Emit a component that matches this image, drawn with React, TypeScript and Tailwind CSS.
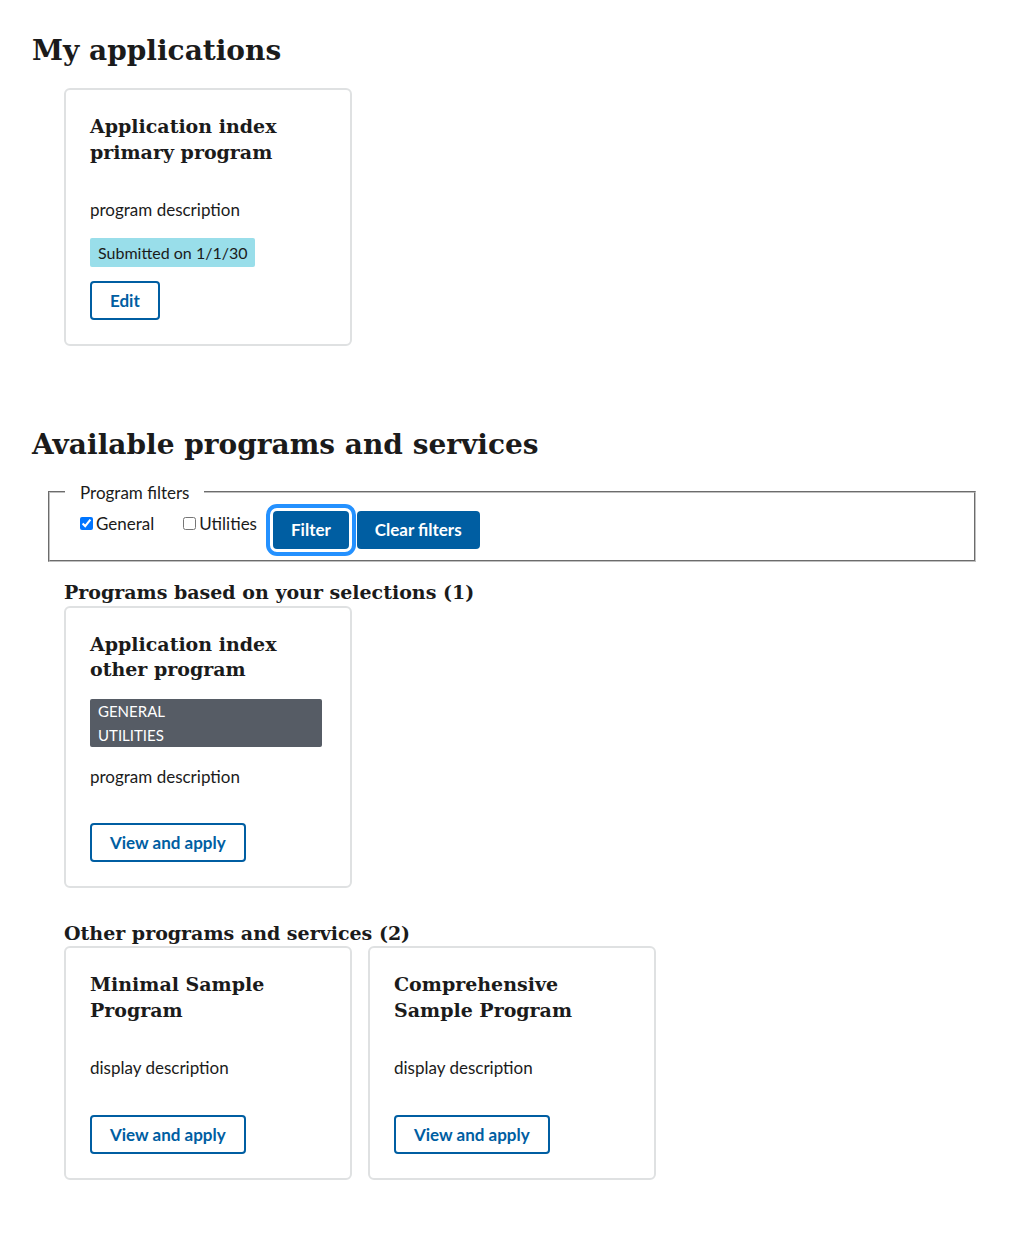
const serif = "font-['DejaVu_Serif',serif] font-bold text-[#1b1b1b]";

function ProgramCard({
  title,
  children,
}: {
  title: string[];
  children: React.ReactNode;
}) {
  return (
    <div className="w-[288px] shrink-0 rounded-md border-2 border-[#dfe1e2] bg-white px-6 pt-6 pb-6">
      <h4 className={`${serif} text-[19px] leading-[25.5px]`}>
        {title.map((line) => (
          <span key={line} className="block">
            {line}
          </span>
        ))}
      </h4>
      {children}
    </div>
  );
}

function OutlineButton({ label, className = "" }: { label: string; className?: string }) {
  return (
    <button
      className={`rounded-[4px] border-2 border-[#005ea2] px-[18px] py-[10px] text-[17px] leading-[15px] font-bold text-[#005ea2] ${className}`}
    >
      {label}
    </button>
  );
}

export default function App() {
  return (
    <div className="min-h-[1244px] bg-white pb-16 font-['Lato',sans-serif] text-[17px] text-[#1b1b1b]">
      {/* My applications */}
      <section className="pt-[31px]">
        <h1 className={`${serif} px-8 text-[28px] leading-[40px]`}>My applications</h1>
        <div className="mt-[17px] px-16">
          <ProgramCard title={["Application index", "primary program"]}>
            <p className="mt-8 leading-[25.5px]">program description</p>
            <div className="mt-[15px] inline-block rounded-[2px] bg-[#99deea] px-2 py-[2px] text-[16px] leading-[25px]">
              Submitted on 1/1/30
            </div>
            <div className="mt-[14px]">
              <OutlineButton label="Edit" />
            </div>
          </ProgramCard>
        </div>
      </section>

      {/* Available programs */}
      <section className="mt-[79px]">
        <h2 className={`${serif} px-8 text-[28px] leading-[40px]`}>Available programs and services</h2>

        <div className="mt-[15px] px-12">
          <fieldset className="border-2 border-[#c0c0c0] pl-[15px] pb-[11px] [border-style:groove]">
            <legend className="px-[15px] leading-[25px]">Program filters</legend>
            <div className="flex items-start pl-[15px] pt-[6px]">
              <label className="mr-[29px] flex items-center leading-[25px]">
                <input type="checkbox" defaultChecked className="mr-[3px] h-[13px] w-[13px]" />
                General
              </label>
              <label className="mr-[16px] flex items-center leading-[25px]">
                <input type="checkbox" className="mr-[3px] h-[13px] w-[13px]" />
                Utilities
              </label>
              <button className="mr-2 rounded-[4px] bg-[#005ea2] px-[18px] py-[11px] leading-[16px] font-bold text-white outline-4 outline-[#2491ff] outline-offset-[3px]">
                Filter
              </button>
              <button className="rounded-[4px] bg-[#005ea2] px-[18px] py-[11px] leading-[16px] font-bold text-white">
                Clear filters
              </button>
            </div>
          </fieldset>
        </div>

        <div className="px-16">
          <h3 className={`${serif} mt-[18px] text-[19px] leading-[25px]`}>
            Programs based on your selections (1)
          </h3>
          <div className="mt-[1px]">
            <ProgramCard title={["Application index", "other program"]}>
              <div className="mt-4 w-[232px] rounded-[2px] bg-[#565c65] px-2 text-[15px] uppercase leading-[24px] text-white">
                <span className="block">General</span>
                <span className="block">Utilities</span>
              </div>
              <p className="mt-[17px] leading-[25.5px]">program description</p>
              <div className="mt-[34px]">
                <OutlineButton label="View and apply" />
              </div>
            </ProgramCard>
          </div>

          <h3 className={`${serif} mt-[33px] text-[19px] leading-[25px]`}>
            Other programs and services (2)
          </h3>
          <div className="flex gap-[16px]">
            <ProgramCard title={["Minimal Sample", "Program"]}>
              <p className="mt-8 leading-[25.5px]">display description</p>
              <div className="mt-[34px]">
                <OutlineButton label="View and apply" />
              </div>
            </ProgramCard>
            <ProgramCard title={["Comprehensive", "Sample Program"]}>
              <p className="mt-8 leading-[25.5px]">display description</p>
              <div className="mt-[34px]">
                <OutlineButton label="View and apply" />
              </div>
            </ProgramCard>
          </div>
        </div>
      </section>
    </div>
  );
}
